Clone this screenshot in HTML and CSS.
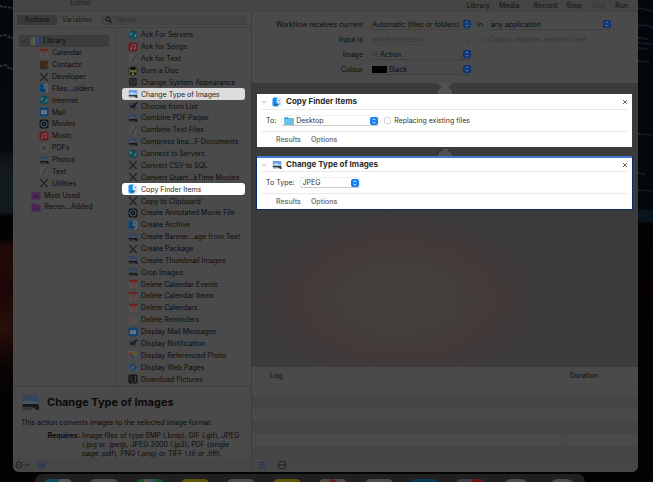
FILE: index.html
```html
<!doctype html>
<html lang="en">
  <head>
    <meta charset="UTF-8" />
    <meta name="viewport" content="width=device-width, initial-scale=1.0" />
    <title>Automator</title>
    <link rel="stylesheet" href="styles.css">
  </head>
  <body>
    <svg class="sprite" aria-hidden="true">
      <symbol id="globe" viewBox="0 0 10 10">
        <circle cx="5" cy="5" r="4.5" fill="#124553" />
        <path d="M1 4l2-2 2 1-1 2-2 1zM6 5l2-2 1 2-2 3-1-1zM4 7l1 2-2-1z" fill="#397078" />
      </symbol>
      <symbol id="music" viewBox="0 0 10 10">
        <rect x=".5" y=".5" width="9" height="9" rx="2" fill="#651a24" />
        <path d="M3.8 7V3l3.4-.7v4" fill="none" stroke="#8c6468" stroke-width=".8" />
        <circle cx="3.2" cy="7.1" r=".9" fill="#8c6468" />
        <circle cx="6.6" cy="6.4" r=".9" fill="#8c6468" />
      </symbol>
      <symbol id="text" viewBox="0 0 10 10">
        <rect x="1" y=".5" width="7.5" height="9" fill="#525252" />
        <path d="M8.5.8L3.5 9" stroke="#2c2c2c" stroke-width=".9" />
        <path d="M2 3h3M2 5h2" stroke="#474747" stroke-width=".5" />
      </symbol>
      <symbol id="burn" viewBox="0 0 10 10">
        <circle cx="5" cy="5" r="4.6" fill="#15140f" />
        <path d="M5 5L1.200 2.500v5zM5 5l3.800-2.500v5zM5 5l2 4H3z" fill="#6b6630" />
        <circle cx="5" cy="5" r="1.100" fill="#747474" />
      </symbol>
      <symbol id="system" viewBox="0 0 10 10">
        <rect x="1" y=".8" width="8" height="8.400" rx="2" fill="#242628" />
        <circle cx="5" cy="5" r="2.200" fill="none" stroke="#3a3c3e" stroke-width="1" />
      </symbol>
      <symbol id="preview" viewBox="0 0 10 10">
        <rect x=".8" y="1" width="8.400" height="5.500" fill="#35465c" />
        <path d="M.8 5l3-1.200 5.400 1.200v1.500H.8z" fill="#4b555e" />
        <path d="M.8 5.800h8.400v1.700H.8z" fill="#15171b" />
        <path d="M5.500 6.800h4V9H8z" fill="#1c1d20" />
        <path d="M1 8.400h5" stroke="#303236" stroke-width=".8" />
      </symbol>
      <symbol id="preview-lit" viewBox="0 0 10 10">
        <rect x=".8" y="1" width="8.400" height="5.500" fill="#6ea0df" />
        <path d="M.8 5l3-2 5.400 2v1.500H.8z" fill="#c5dbe9" />
        <path d="M.8 5.800h8.400v1.700H.8z" fill="#27364d" />
        <path d="M5.500 6.800h4V9H8z" fill="#384048" />
        <path d="M1 8.300h5" stroke="#a9adb2" stroke-width=".8" />
      </symbol>
      <symbol id="automate" viewBox="0 0 10 10">
        <path d="M1.500 2h6v6.500h-6z" fill="#30333e" />
        <path d="M3 5l1.500 2L9 1.500" fill="none" stroke="#12151e" stroke-width="1.200" />
        <path d="M2 7.500h4M2 3h3" stroke="#5b6071" stroke-width=".6" />
      </symbol>
      <symbol id="tools" viewBox="0 0 10 10">
        <path d="M1.500 1.500L8.700 9M8.500 1.500L1.300 9" stroke="#23272b" stroke-width="1.500" />
        <path d="M.8 1l2.200.4M9.200 1l-2 1.600" stroke="#23272b" stroke-width="1" />
      </symbol>
      <symbol id="finder" viewBox="0 0 10 10">
        <rect x=".5" y=".5" width="9" height="9" rx="1.800" fill="#56636d" />
        <path d="M2.300.5h3.200C4.800 2 4.500 3.700 4.500 5.500h1.300c0 1.500.1 3 .5 4h-4A1.800 1.800 0 0 1 .5 7.700V2.300A1.800 1.800 0 0 1 2.300.5z" fill="#0d4774" />
        <path d="M2.800 3v1M7.200 3v1M2.300 6.700c1.600 1.300 3.800 1.300 5.400 0" fill="none" stroke="#111d29" stroke-width=".6" />
      </symbol>
      <symbol id="finder-lit" viewBox="0 0 10 10">
        <rect x=".5" y=".5" width="9" height="9" rx="1.800" fill="#d9eaf8" />
        <path d="M2.300.5h3.200C4.800 2 4.500 3.700 4.500 5.500h1.300c0 1.500.1 3 .5 4h-4A1.800 1.800 0 0 1 .5 7.700V2.300A1.800 1.800 0 0 1 2.300.5z" fill="#1b91f0" />
        <path d="M2.800 3v1M7.200 3v1M2.300 6.700c1.600 1.300 3.800 1.300 5.400 0" fill="none" stroke="#17395d" stroke-width=".7" />
      </symbol>
      <symbol id="movie" viewBox="0 0 10 10">
        <rect x=".5" y=".5" width="9" height="9" rx="2" fill="#101418" />
        <circle cx="5" cy="5" r="3" fill="none" stroke="#3c5668" stroke-width="1.100" />
        <circle cx="5" cy="5" r="1" fill="#33434f" />
      </symbol>
      <symbol id="calendar" viewBox="0 0 10 10">
        <rect x=".8" y=".8" width="8.400" height="8.400" rx="1" fill="#545252" />
        <path d="M.8 3.200V1.800a1 1 0 0 1 1-1h6.400a1 1 0 0 1 1 1v1.400z" fill="#6b2321" />
        <path d="M3.300 4.300h1.200v3.500M5.600 4.300h1.600L6.300 8" fill="none" stroke="#68302d" stroke-width=".8" />
      </symbol>
      <symbol id="reminders" viewBox="0 0 10 10">
        <rect x="1" y=".8" width="8" height="8.400" rx="1.500" fill="#505050" />
        <circle cx="2.500" cy="2.800" r=".7" fill="#654129" />
        <circle cx="2.500" cy="5" r=".7" fill="#662b25" />
        <circle cx="2.500" cy="7.200" r=".7" fill="#56412f" />
        <path d="M4 3h4M4 5h4M4 7h4" stroke="#474747" stroke-width=".4" />
      </symbol>
      <symbol id="mail" viewBox="0 0 10 10">
        <rect x=".5" y=".5" width="9" height="9" rx="2" fill="#0d4073" />
        <rect x="2" y="3" width="6" height="4.200" rx=".6" fill="#667580" />
        <path d="M2.200 3.300L5 5.500l2.800-2.200" fill="none" stroke="#34506a" stroke-width=".5" />
      </symbol>
      <symbol id="photo" viewBox="0 0 10 10">
        <rect x=".5" y=".5" width="9" height="9" rx="2" fill="#535353" />
        <path d="M5 5V1l3 1.500z" fill="#66562b" />
        <path d="M5 5l3-2.500L9 5.500z" fill="#4d632d" />
        <path d="M5 5l4 .5L7 8.500z" fill="#24605c" />
        <path d="M5 5l2 3.500H4z" fill="#284567" />
        <path d="M5 5L4 8.500 1.500 6z" fill="#5c3058" />
        <path d="M5 5L1.500 6 2 2.500z" fill="#6e2a2b" />
        <path d="M5 5L2 2.500 5 1z" fill="#75462a" />
      </symbol>
      <symbol id="safari" viewBox="0 0 10 10">
        <rect x=".5" y=".5" width="9" height="9" rx="2" fill="#515253" />
        <circle cx="5" cy="5" r="3.700" fill="#174672" />
        <path d="M7.500 2.500L5.700 5.700 2.500 7.500l1.800-3.200z" fill="#6a6e72" />
        <path d="M7.500 2.500L5.700 5.700 4.300 4.300z" fill="#702d2d" />
      </symbol>
      <symbol id="download" viewBox="0 0 10 10">
        <rect x=".5" y=".5" width="9" height="9" rx="1.200" fill="#171515" />
        <path d="M2 1.500l2 2-1 3M6 2l2 1-1 3 1 2M4 7l1 2" fill="none" stroke="#544b49" stroke-width=".9" />
      </symbol>
      <symbol id="contacts" viewBox="0 0 10 10">
        <rect x="1" y=".8" width="8" height="8.400" rx="1" fill="#3c2b1c" />
        <path d="M9 2.500v5" stroke="#57503b" stroke-width=".7" />
      </symbol>
      <symbol id="pdf" viewBox="0 0 10 10">
        <rect x="1" y=".5" width="8" height="9" fill="#4e5051" />
        <circle cx="5" cy="5" r="1.500" fill="#28323b" />
        <path d="M3 5h4M5 3v4" stroke="#36424d" stroke-width=".8" />
      </symbol>
      <symbol id="library" viewBox="0 0 10 10">
        <path d="M.5 2l2.200-1v8.500H.5z" fill="#445d48" />
        <path d="M2.700 1h2.500v8.500H2.700z" fill="#5c633b" />
        <path d="M5.200.8h2v8.700h-2z" fill="#3b3c78" />
        <path d="M7.200.8h2.300v8.700H7.200z" fill="#35427a" />
      </symbol>
      <symbol id="smart" viewBox="0 0 10 10">
        <path d="M.5 1.500h3.500l1 1h4.500v7h-9z" fill="#482354" />
        <path d="M.5 3.300h9" stroke="#5a3065" stroke-width=".6" />
        <circle cx="5" cy="6.300" r="1.200" fill="#3b1c46" />
      </symbol>
      <symbol id="folder" viewBox="0 0 10 10">
        <path d="M.3 1.200h3.500l1 1h4.900v6.600H.3z" fill="#3c9fd0" />
        <path d="M.3 3h9.400v5.800H.3z" fill="#6cc3ea" />
      </symbol>
      <symbol id="chevron" viewBox="0 0 8 8">
        <path d="M1.500 2.500L4 5.500l2.500-3" fill="none" stroke="currentColor" />
      </symbol>
      <symbol id="stepper" viewBox="0 0 8 8">
        <rect width="8" height="8" rx="2" fill="currentColor" />
        <path d="M2.500 3.200L4 1.700l1.500 1.500M2.500 4.800L4 6.300l1.500-1.500" fill="none" stroke="var(--arrow)" stroke-width=".9" />
      </symbol>
      <symbol id="close" viewBox="0 0 6 6">
        <path d="M1 1l4 4M5 1L1 5" stroke="currentColor" stroke-width=".9" />
      </symbol>
    </svg>

    <div class="desktop">
      <svg class="wallpaper wallpaper-left" viewBox="0 0 13 80" preserveAspectRatio="xMinYMin" aria-hidden="true">
        <path d="M0 6l3 1h3l7 1M0 36l5-1 4 2 4 1M0 66l6-1 3 3 4 1" />
      </svg>

      <main class="window">
        <header class="toolbar">
          <span class="edited">Edited</span>
          <nav class="toolbar-buttons">
            <button>Library</button>
            <button>Media</button>
            <button class="record">Record</button>
            <button>Step</button>
            <button disabled>Stop</button>
            <button>Run</button>
          </nav>
        </header>

        <div class="content">
          <section class="browser">
            <div class="filter-bar">
              <button class="tab tab-active">Actions</button>
              <button class="tab">Variables</button>
              <label class="search">
                <svg viewBox="0 0 8 8" aria-hidden="true">
                  <circle cx="3.300" cy="3.300" r="2.400" fill="none" stroke="currentColor" />
                  <path d="M5 5l2.500 2.500" stroke="currentColor" stroke-width="1.200" />
                </svg>
                <input type="search" placeholder="Name" aria-label="Name" />
              </label>
            </div>

            <div class="lists">
              <ul class="library">
                <li class="root selected"><svg class="chevron"><use href="#chevron" /></svg><svg class="icon"><use href="#library" /></svg>Library</li>
                <li><svg class="icon"><use href="#calendar" /></svg>Calendar</li>
                <li><svg class="icon"><use href="#contacts" /></svg>Contacts</li>
                <li><svg class="icon"><use href="#tools" /></svg>Developer</li>
                <li><svg class="icon"><use href="#finder" /></svg>Files...olders</li>
                <li><svg class="icon"><use href="#globe" /></svg>Internet</li>
                <li><svg class="icon"><use href="#mail" /></svg>Mail</li>
                <li><svg class="icon"><use href="#movie" /></svg>Movies</li>
                <li><svg class="icon"><use href="#music" /></svg>Music</li>
                <li><svg class="icon"><use href="#pdf" /></svg>PDFs</li>
                <li><svg class="icon"><use href="#preview" /></svg>Photos</li>
                <li><svg class="icon"><use href="#text" /></svg>Text</li>
                <li><svg class="icon"><use href="#tools" /></svg>Utilities</li>
                <li class="smart"><svg class="icon"><use href="#smart" /></svg>Most Used</li>
                <li class="smart"><svg class="icon"><use href="#smart" /></svg>Recen...Added</li>
              </ul>

              <ul class="actions">
                <li><svg class="icon"><use href="#globe" /></svg>Ask For Servers</li>
                <li><svg class="icon"><use href="#music" /></svg>Ask for Songs</li>
                <li><svg class="icon"><use href="#text" /></svg>Ask for Text</li>
                <li><svg class="icon"><use href="#burn" /></svg>Burn a Disc</li>
                <li><svg class="icon"><use href="#system" /></svg>Change System Appearance</li>
                <li class="lit lit-grey"><svg class="icon"><use href="#preview-lit" /></svg>Change Type of Images</li>
                <li><svg class="icon"><use href="#automate" /></svg>Choose from List</li>
                <li><svg class="icon"><use href="#preview" /></svg>Combine PDF Pages</li>
                <li><svg class="icon"><use href="#text" /></svg>Combine Text Files</li>
                <li><svg class="icon"><use href="#preview" /></svg>Compress Ima...F Documents</li>
                <li><svg class="icon"><use href="#globe" /></svg>Connect to Servers</li>
                <li><svg class="icon"><use href="#tools" /></svg>Convert CSV to SQL</li>
                <li><svg class="icon"><use href="#tools" /></svg>Convert Quart...kTime Movies</li>
                <li class="lit"><svg class="icon"><use href="#finder-lit" /></svg>Copy Finder Items</li>
                <li><svg class="icon"><use href="#tools" /></svg>Copy to Clipboard</li>
                <li><svg class="icon"><use href="#movie" /></svg>Create Annotated Movie File</li>
                <li><svg class="icon"><use href="#finder" /></svg>Create Archive</li>
                <li><svg class="icon"><use href="#preview" /></svg>Create Banner...age from Text</li>
                <li><svg class="icon"><use href="#tools" /></svg>Create Package</li>
                <li><svg class="icon"><use href="#preview" /></svg>Create Thumbnail Images</li>
                <li><svg class="icon"><use href="#preview" /></svg>Crop Images</li>
                <li><svg class="icon"><use href="#calendar" /></svg>Delete Calendar Events</li>
                <li><svg class="icon"><use href="#calendar" /></svg>Delete Calendar Items</li>
                <li><svg class="icon"><use href="#calendar" /></svg>Delete Calendars</li>
                <li><svg class="icon"><use href="#reminders" /></svg>Delete Reminders</li>
                <li><svg class="icon"><use href="#mail" /></svg>Display Mail Messages</li>
                <li><svg class="icon"><use href="#automate" /></svg>Display Notification</li>
                <li><svg class="icon"><use href="#photo" /></svg>Display Referenced Photo</li>
                <li><svg class="icon"><use href="#safari" /></svg>Display Web Pages</li>
                <li><svg class="icon"><use href="#download" /></svg>Download Pictures</li>
              </ul>
            </div>

            <article class="description">
              <h1><svg><use href="#preview" /></svg>Change Type of Images</h1>
              <p>This action converts images to the selected image format.</p>
              <dl>
                <dt>Requires:</dt>
                <dd>Image files of type BMP (.bmp), GIF (.gif), JPEG<br />(.jpg or .jpeg), JPEG 2000 (.jp2), PDF (single<br />page .pdf), PNG (.png) or TIFF (.tif or .tiff).</dd>
              </dl>
            </article>

            <footer class="status-bar">
              <button class="menu-button" aria-label="Options">
                <svg viewBox="0 0 16 8">
                  <circle cx="4" cy="4" r="3" fill="none" stroke="currentColor" stroke-width=".8" />
                  <path d="M2.500 4h3" stroke="currentColor" stroke-width=".7" stroke-dasharray=".8 .4" />
                  <path d="M10.500 3L12.300 5l1.800-2" fill="none" stroke="currentColor" />
                </svg>
              </button>
              <button class="blue" aria-label="Show description">
                <svg viewBox="0 0 8 8">
                  <rect x="1" y="1" width="6" height="6" rx="1" fill="none" stroke="currentColor" stroke-width=".8" />
                  <path d="M2 3.500h4M2 5.200h4" stroke="currentColor" stroke-width=".8" />
                </svg>
              </button>
            </footer>
          </section>

          <section class="workflow">
            <form class="settings">
              <label for="receives">Workflow receives current</label>
              <div class="field-row">
                <span class="popup popup-wide">
                  <select id="receives"><option>Automatic (files or folders)</option></select>
                  <svg class="stepper"><use href="#stepper" /></svg>
                </span>
                <label for="application">in</label>
                <span class="popup popup-app">
                  <select id="application"><option>any application</option></select>
                  <svg class="stepper"><use href="#stepper" /></svg>
                </span>
              </div>
              <label for="input">Input is</label>
              <div class="field-row">
                <span class="popup popup-wide popup-off">
                  <select id="input" disabled><option>entire selection</option></select>
                  <svg class="stepper"><use href="#stepper" /></svg>
                </span>
                <label class="check check-off"><input type="checkbox" disabled />Output replaces selected text</label>
              </div>
              <label for="image">Image</label>
              <div class="field-row">
                <span class="popup popup-wide">
                  <svg class="gear" viewBox="0 0 6 6"><circle cx="3" cy="3" r="1.700" fill="none" stroke="#2d2d2d" stroke-dasharray=".9 .5" /></svg>
                  <select id="image"><option>Action</option></select>
                  <svg class="stepper"><use href="#stepper" /></svg>
                </span>
              </div>
              <label for="colour">Colour</label>
              <div class="field-row">
                <span class="popup popup-wide">
                  <span class="swatch"></span>
                  <select id="colour"><option>Black</option></select>
                  <svg class="stepper"><use href="#stepper" /></svg>
                </span>
              </div>
            </form>

            <div class="canvas">
              <svg class="joint" viewBox="0 0 18 11" aria-hidden="true">
                <path d="M1 0h16l-5 4 4 3v4H2V7l4-3z" fill="#515151" />
              </svg>
              <article class="card">
                <header>
                  <svg class="chevron"><use href="#chevron" /></svg>
                  <svg class="card-icon"><use href="#finder-lit" /></svg>
                  <h2>Copy Finder Items</h2>
                  <button class="close" aria-label="Remove"><svg><use href="#close" /></svg></button>
                </header>
                <div class="card-body">
                  <label for="destination">To:</label>
                  <span class="popup popup-destination">
                    <svg class="icon"><use href="#folder" /></svg>
                    <select id="destination"><option>Desktop</option></select>
                    <svg class="stepper"><use href="#stepper" /></svg>
                  </span>
                  <label class="check"><input type="checkbox" />Replacing existing files</label>
                </div>
                <footer><button>Results</button><button>Options</button></footer>
              </article>
              <svg class="joint joint-small" viewBox="0 0 18 9" aria-hidden="true">
                <path d="M1 9V7l2-4 3-1h6l3 1 2 4v2z" fill="#505050" />
                <path d="M1 8l2-4 3-1M17 8l-2-4-3-1" fill="none" stroke="#0a1c3a" />
              </svg>
              <article class="card card-selected">
                <header>
                  <svg class="chevron"><use href="#chevron" /></svg>
                  <svg class="card-icon"><use href="#preview-lit" /></svg>
                  <h2>Change Type of Images</h2>
                  <button class="close" aria-label="Remove"><svg><use href="#close" /></svg></button>
                </header>
                <div class="card-body">
                  <label for="type">To Type:</label>
                  <span class="popup popup-type">
                    <select id="type"><option>JPEG</option></select>
                    <svg class="stepper"><use href="#stepper" /></svg>
                  </span>
                </div>
                <footer><button>Results</button><button>Options</button></footer>
              </article>
            </div>

            <table class="log">
              <thead>
                <tr><th>Log</th><th class="duration">Duration</th></tr>
              </thead>
              <tbody>
                <tr><td></td><td></td></tr>
                <tr><td></td><td></td></tr>
                <tr><td></td><td></td></tr>
                <tr><td></td><td></td></tr>
                <tr><td></td><td></td></tr>
                <tr><td></td><td></td></tr>
              </tbody>
            </table>

            <footer class="status-bar status-bar-log">
              <button class="blue" aria-label="Show log">
                <svg viewBox="0 0 8 8"><path d="M1 1.500h6M1 4h6M1 6.500h6" stroke="currentColor" /></svg>
              </button>
              <button aria-label="Show variables">
                <svg viewBox="0 0 8 8">
                  <rect x=".5" y=".5" width="7" height="7" rx="1" fill="none" stroke="currentColor" stroke-width=".8" />
                  <path d="M.5 4h7" stroke="currentColor" />
                </svg>
              </button>
            </footer>
          </section>
        </div>
      </main>

      <svg class="wallpaper wallpaper-right" viewBox="0 0 15 220" preserveAspectRatio="xMinYMin" aria-hidden="true">
        <path d="M0 8l6 1 8 2M0 26l7-1 8 2M0 38l10 1M0 43l14 1M0 48l10 1M0 61l12 1M0 134l14 1M0 173l8 1M0 190l14 1" />
      </svg>
    </div>

    <div class="dock" aria-hidden="true">
      <span class="app app-finder"></span>
      <span class="app"></span>
      <span class="app app-green"></span>
      <span class="app app-yellow"></span>
      <span class="app"></span>
      <span class="app app-yellow"></span>
      <span class="app app-red"></span>
      <span class="app"></span>
      <span class="app app-blue"></span>
      <span class="app app-badge"></span>
      <span class="app app-round"></span>
      <span class="app app-round"></span>
    </div>
  </body>
</html>
```

FILE: styles.css
```css
* {
  margin: 0;
  padding: 0;
  box-sizing: border-box;
}

body {
  font-family: Inter, 'Liberation Sans', sans-serif;
  font-size: 7px;
  line-height: 9px;
  color: #0c0c0c;
  background: #030304;
  height: 100vh;
  overflow: hidden;
  display: flex;
  flex-direction: column;
}

button,
input,
select {
  font: inherit;
  color: inherit;
  background: none;
  border: none;
}

select {
  appearance: none;
  flex: 1;
  min-width: 0;
}

svg {
  display: block;
  flex: none;
}

ul {
  list-style: none;
}

.sprite {
  position: absolute;
  width: 0;
  height: 0;
}

/* Desktop */
.desktop {
  flex: 1;
  min-height: 0;
  display: grid;
  grid-template-columns: 13px minmax(0, 1fr) 15px;
}

.wallpaper {
  width: 100%;
  height: 100%;
  fill: none;
  stroke-width: 2;
  stroke-dasharray: 3 1;
}

.wallpaper-left {
  stroke: #2b2e31;
  background: linear-gradient(#04070a 0, #070b0e 150px, #11191c 165px, #101a1e 212px, #030303 216px, #040303 238px, #240b08 248px, #1b0706 290px, #280f0a 330px, #0c0404 365px, #020202 400px);
}

.wallpaper-right {
  stroke: #0e202d;
  background: linear-gradient(#03060b 0, #03060b 208px, #081420 211px, #081420 221px, #020202 224px, #060202 290px, #020202 330px);
}

.window {
  background: #4a4a4a;
  border-radius: 0 0 6px 6px;
  overflow: hidden;
  display: flex;
  flex-direction: column;
}

.toolbar {
  height: 12px;
  flex: none;
  display: flex;
  justify-content: space-between;
  align-items: center;
  background: #454545;
  border-bottom: 1px solid #414141;
  padding: 0 10px 0 57px;
}

.edited {
  align-self: flex-end;
  margin-bottom: 4px;
  color: #222;
}

.toolbar-buttons {
  display: flex;
  gap: 9px;
  font-weight: 500;
  color: #1b1b1b;
}

.toolbar-buttons .record {
  margin-left: 5px;
}

.toolbar-buttons button:disabled {
  color: #383838;
}

.content {
  flex: 1;
  min-height: 0;
  display: grid;
  grid-template-columns: 239px minmax(0, 1fr);
}

/* Action browser */
.browser {
  border-right: 1px solid #3c3c3c;
  display: flex;
  flex-direction: column;
  min-height: 0;
}

.filter-bar {
  height: 16px;
  flex: none;
  display: flex;
  align-items: center;
  padding: 0 4px;
  border-bottom: 1px solid #414141;
}

.tab {
  width: 40px;
  height: 10px;
  line-height: 10px;
  border-radius: 2px;
  color: #1c1c1c;
}

.tab-active {
  background: #3a3a3a;
  color: #0c0c0c;
}

.search {
  flex: 1;
  height: 10px;
  margin-left: 4px;
  padding: 0 4px;
  display: flex;
  align-items: center;
  gap: 4px;
  background: #444;
  border-radius: 2px;
}

.search svg {
  width: 7px;
  height: 7px;
}

.search input {
  flex: 1;
  min-width: 0;
  outline: none;
}

.search input::placeholder {
  color: #323232;
}

.lists {
  flex: 1;
  min-height: 0;
  display: grid;
  grid-template-columns: 103px minmax(0, 1fr);
  border-bottom: 1px solid #3f3f3f;
}

.library,
.actions {
  display: grid;
  min-height: 0;
}

.library {
  grid-template-rows: repeat(29, minmax(0, 1fr));
  padding: 7px 6px;
  border-right: 1px solid #424242;
}

.actions {
  grid-template-rows: repeat(30, minmax(0, 1fr));
  padding: 1px 6px;
}

.library li,
.actions li {
  display: flex;
  align-items: center;
  gap: 3px;
  min-height: 0;
  white-space: nowrap;
}

.library li {
  padding-left: 20px;
}

.library .root {
  padding-left: 0;
  gap: 3px;
}

.library .smart {
  padding-left: 12px;
}

.library .selected {
  background: #3c3c3c;
  border-radius: 2px;
}

.actions li {
  padding-left: 6px;
  border-radius: 3px;
}

.actions .lit {
  background: #fff;
  color: #1f1f1f;
}

.actions .lit-grey {
  background: #dcdcdc;
}

.icon {
  width: 10px;
  height: 10px;
}

.chevron {
  width: 8px;
  height: 8px;
  color: #292929;
}

.description {
  height: 71px;
  flex: none;
  padding: 6px 8px 0;
}

.description h1 {
  display: flex;
  align-items: center;
  gap: 7px;
  font-size: 11px;
  line-height: 19px;
  font-weight: 700;
  color: #0a0a0a;
}

.description h1 svg {
  width: 19px;
  height: 19px;
}

.description p {
  margin: 6px 0 4px;
}

.description dl {
  display: flex;
  gap: 2px;
  white-space: nowrap;
}

.description dt {
  width: 59px;
  text-align: right;
  font-weight: 700;
}

.status-bar {
  height: 14px;
  flex: none;
  display: flex;
  align-items: center;
  gap: 7px;
  padding: 0 2px;
  background: #464646;
  color: #1c1c1c;
}

.status-bar svg {
  width: 8px;
  height: 8px;
}

.status-bar .menu-button svg {
  width: 16px;
}

.status-bar .blue {
  color: #1c325f;
}

.status-bar-log {
  gap: 12px;
  padding: 0 6px;
}

/* Workflow */
.workflow {
  display: flex;
  flex-direction: column;
  min-width: 0;
  min-height: 0;
}

.settings {
  height: 71px;
  flex: none;
  display: grid;
  grid-template-columns: 111px minmax(0, 1fr);
  grid-auto-rows: 11px;
  gap: 4px 7px;
  align-items: center;
  padding-top: 7px;
  white-space: nowrap;
}

.settings > label {
  text-align: right;
}

.field-row {
  display: flex;
  align-items: center;
  gap: 6px;
}

.popup {
  --arrow: #7f8ca0;
  height: 11px;
  display: flex;
  align-items: center;
  gap: 2px;
  padding-left: 2px;
  border-radius: 2px;
  border-bottom: 1px solid #404040;
}

.popup-wide {
  width: 101px;
}

.popup-app {
  width: 122px;
}

.popup-off,
.check-off {
  color: #363636;
}

.popup-off {
  border-color: #464646;
}

.popup select:disabled {
  color: #363636;
  opacity: 1;
}

.stepper {
  width: 8px;
  height: 8px;
  color: #0b3475;
}

.popup-off .stepper {
  --arrow: #363636;
  color: transparent;
}

.gear {
  width: 6px;
  height: 6px;
}

.swatch {
  width: 15px;
  height: 7px;
  background: #000;
}

.check {
  display: flex;
  align-items: center;
  gap: 3px;
}

.check input {
  appearance: none;
  width: 7px;
  height: 7px;
  border: 1px solid #d5d5d5;
  border-radius: 2px;
}

.check-off {
  margin-left: 2px;
}

.check-off input {
  border-color: #404040;
}

.canvas {
  flex: 1;
  min-height: 0;
  padding: 0 6px 0 5px;
  background:
    radial-gradient(ellipse 150px 90px at 38% 76%, #433e39 0, #433e39 40%, #433939 65%, transparent 100%),
    #3b3b3b;
}

.joint {
  width: 18px;
  height: 11px;
  margin: 0 auto;
}

.joint-small {
  height: 9px;
}

.card {
  height: 53px;
  background: #fff;
  color: #333;
  display: flex;
  flex-direction: column;
}

.card-selected {
  border-top: 2px solid #3f78cf;
  box-shadow: 1px 1px 0 #0a2f68, -1px 1px 0 #0a2f68;
}

.card header {
  height: 16px;
  display: flex;
  align-items: center;
  margin: 0 4px;
  border-bottom: 1px solid #eaeaea;
}

.card-selected header {
  height: 14px;
}

.card .chevron {
  width: 6px;
  color: #aaa;
}

.card-icon {
  width: 10px;
  height: 10px;
  margin: 0 4px 0 5px;
}

.card h2 {
  font-size: 8px;
  font-weight: 700;
  color: #2b2b2b;
}

.close {
  margin-left: auto;
  color: #555;
}

.close svg {
  width: 6px;
  height: 6px;
}

.card-body {
  flex: 1;
  display: flex;
  align-items: center;
  gap: 5px;
  padding-left: 9px;
}

.card .popup {
  --arrow: #fff;
  border: 1px solid #efefef;
  border-bottom-color: #ccc;
}

.card .stepper {
  color: #167bf2;
}

.popup-destination {
  width: 98px;
}

.popup-type {
  width: 60px;
}

.card footer {
  height: 16px;
  display: flex;
  align-items: center;
  gap: 10px;
  margin: 0 4px;
  padding-left: 15px;
  border-top: 1px solid #eaeaea;
  color: #777;
  font-weight: 600;
}

/* Log */
.log {
  width: 100%;
  height: 91px;
  flex: none;
  table-layout: fixed;
  border-collapse: collapse;
}

.log th {
  height: 18px;
  text-align: left;
  font-weight: 400;
  padding-left: 18px;
  border-bottom: 1px solid #464646;
}

.log .duration {
  width: 72px;
  padding-left: 4px;
}

.log td {
  height: 12px;
}

.log td + td {
  border-left: 1px solid #444;
}

.log tbody tr:nth-child(even) {
  background: #454545;
}

/* Dock */
.dock {
  height: 8px;
  margin: 2px 68px 0 35px;
  padding: 5px 9px 0;
  flex: none;
  overflow: hidden;
  display: flex;
  justify-content: space-between;
  background: #202020;
  border-radius: 8px 8px 0 0;
}

.app {
  width: 28px;
  height: 10px;
  border-radius: 5px;
  background: #4b4b4b;
}

.app-finder {
  background: linear-gradient(90deg, #0e4a5c 55%, #525558 55%);
}

.app-green {
  background: linear-gradient(90deg, #185026 30%, #535353 30%, #304963 70%, #185026 70%);
}

.app-yellow {
  background: #5d530b;
}

.app-red {
  background: radial-gradient(circle at 50% 50%, #641b1b 30%, #4e4a4a 35%);
}

.app-blue {
  background: #073953;
}

.app-badge {
  background: radial-gradient(circle at 90% 30%, #701010 35%, #3c4045 38%);
}

.app-round {
  border-radius: 14px 14px 0 0;
}
```
